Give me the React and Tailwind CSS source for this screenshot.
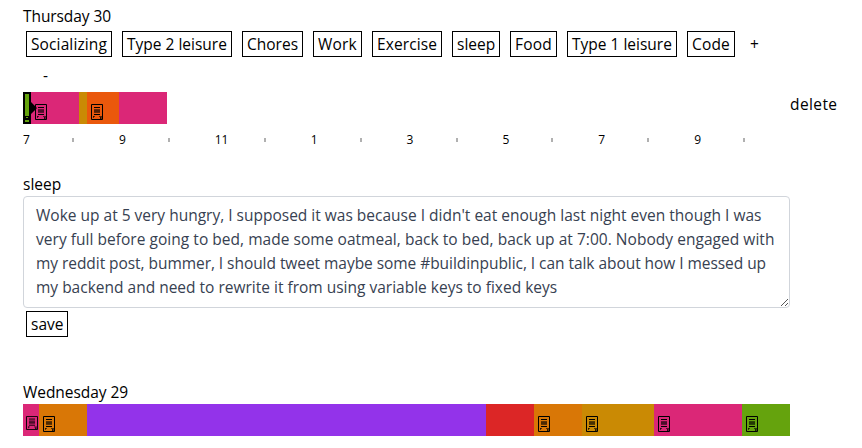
const categories = [
  { name: "Socializing", size: "w-[86px] tracking-[0.12px]" },
  { name: "Type 2 leisure", size: "w-[110px]" },
  { name: "Chores", size: "w-[61px]" },
  { name: "Work", size: "w-[49px] tracking-[0.2px]" },
  { name: "Exercise", size: "w-[70px] tracking-[0.1px]" },
  { name: "sleep", size: "w-[48px]" },
  { name: "Food", size: "w-[47px] tracking-[0.2px]" },
  { name: "Type 1 leisure", size: "w-[110px]" },
  { name: "Code", size: "w-[48px] tracking-[0.15px]" },
];

const thursday = [
  { style: "w-2 bg-[#65a30d]", selected: true },
  { style: "w-12 bg-[#db2777]", note: true },
  { style: "w-2 bg-[#ca8a04]" },
  { style: "w-8 bg-[#ea580c]", note: true },
  { style: "w-12 bg-[#db2777]" },
];

const wednesday = [
  { style: "w-4 bg-[#db2777]", note: true, narrow: true },
  { style: "w-12 bg-[#d97706]", note: true },
  { style: "w-[399px] bg-[#9333ea]" },
  { style: "w-12 bg-[#dc2626]" },
  { style: "w-12 bg-[#d97706]", note: true },
  { style: "w-[72px] bg-[#ca8a04]", note: true },
  { style: "w-[88px] bg-[#db2777]", note: true },
  { style: "w-12 bg-[#65a30d]", note: true },
];

const hours = ["7", "9", "11", "1", "3", "5", "7", "9"];

function NoteIcon({ narrow }) {
  return (
    <svg
      className={narrow ? "ml-[3px] mt-3 h-[14px] w-3 shrink-0" : "ml-1 mt-3 h-4 w-3 shrink-0"}
      viewBox="0 0 12 16"
      preserveAspectRatio="none"
      fill="none"
      stroke="#000"
    >
      <path d="M.5 .5h11v15H.5z" />
      <path d="M3 3.5h6M3 10.5h6" />
      <path d="M3 5.5h6M3 8.5h6" strokeOpacity=".55" />
      <path d="M3 7h6" strokeWidth="2" strokeOpacity=".65" />
      <path d="M2 12.5h2M2.5 12v2M8 12.5h3M9.5 13v2" strokeOpacity=".6" />
      <path d="M9 13h2v2H9z" fill="#000" stroke="none" fillOpacity=".5" />
    </svg>
  );
}

function PencilIcon() {
  return (
    <svg className="absolute left-0 top-0 h-8 w-[14px]" viewBox="0 0 14 32">
      <path d="M0 0h8v10l6 6-6 6v10H0zM2 2v22h4V2zM2 28v2h4v-2zM3 25v1h2v-1z" fillRule="evenodd" />
    </svg>
  );
}

function Bar({ segments }) {
  return (
    <div className="flex h-8">
      {segments.map((s, i) => (
        <div key={i} className={`relative flex h-8 shrink-0 items-start ${s.selected ? "z-10" : ""} ${s.style}`}>
          {s.selected && <PencilIcon />}
          {s.note && <NoteIcon narrow={s.narrow} />}
        </div>
      ))}
    </div>
  );
}

export default function App() {
  return (
    <div className="h-[448px] w-[862px] overflow-hidden bg-white pl-[23px] pt-1 font-['Open_Sans',sans-serif] text-[15.5px] leading-6 text-black">
      <h2 className="tracking-[-0.08px]">Thursday 30</h2>
      <div className="flex h-8 items-start gap-2.5 pl-[3px] pt-[3px]">
        {categories.map((c) => (
          <button key={c.name} className={`h-[26px] shrink-0 whitespace-nowrap border border-black pl-1 text-left ${c.size}`}>
            {c.name}
          </button>
        ))}
        <button className="ml-[5px] h-[26px]">+</button>
      </div>
      <div className="flex h-8 items-center pb-0.5 pl-5">
        <button>-</button>
      </div>
      <div className="flex h-8 w-[839px]">
        <div className="w-[767px]">
          <Bar segments={thursday} />
        </div>
        <button className="h-6 tracking-[0.4px]">delete</button>
      </div>
      <div className="grid h-8 w-[767px] grid-cols-8 text-[12px] leading-8">
        {hours.map((h, i) => (
          <div key={i} className="flex items-center">
            <span className="w-[49px]">{h}</span>
            <span className="h-1 w-0.5 bg-[#b0b0b0]" />
          </div>
        ))}
      </div>
      <div className="mt-4">sleep</div>
      <div className="relative h-28 w-[767px] whitespace-nowrap rounded border border-[#d1d5db] py-1.5 pl-3 text-[#374151]">
        <p>Woke up at 5 very hungry, I supposed it was because I didn't eat enough last night even though I was</p>
        <p className="tracking-[0.035px]">very full before going to bed, made some oatmeal, back to bed, back up at 7:00. Nobody engaged with</p>
        <p className="tracking-[-0.053px]">my reddit post, bummer, I should tweet maybe some #buildinpublic, I can talk about how I messed up</p>
        <p>my backend and need to rewrite it from using variable keys to fixed keys</p>
        <svg className="absolute bottom-px right-px h-[7px] w-[7px]" viewBox="0 0 7 7" stroke="#444" strokeWidth=".9">
          <path d="M0 7 7 0M4 7l3-3" />
        </svg>
      </div>
      <div className="h-16 pl-[3px] pt-[3px]">
        <button className="block h-[26px] w-[42px] border border-black pl-1 text-left">save</button>
      </div>
      <h2 className="mt-2 tracking-[-0.06px]">Wednesday 29</h2>
      <Bar segments={wednesday} />
    </div>
  );
}
